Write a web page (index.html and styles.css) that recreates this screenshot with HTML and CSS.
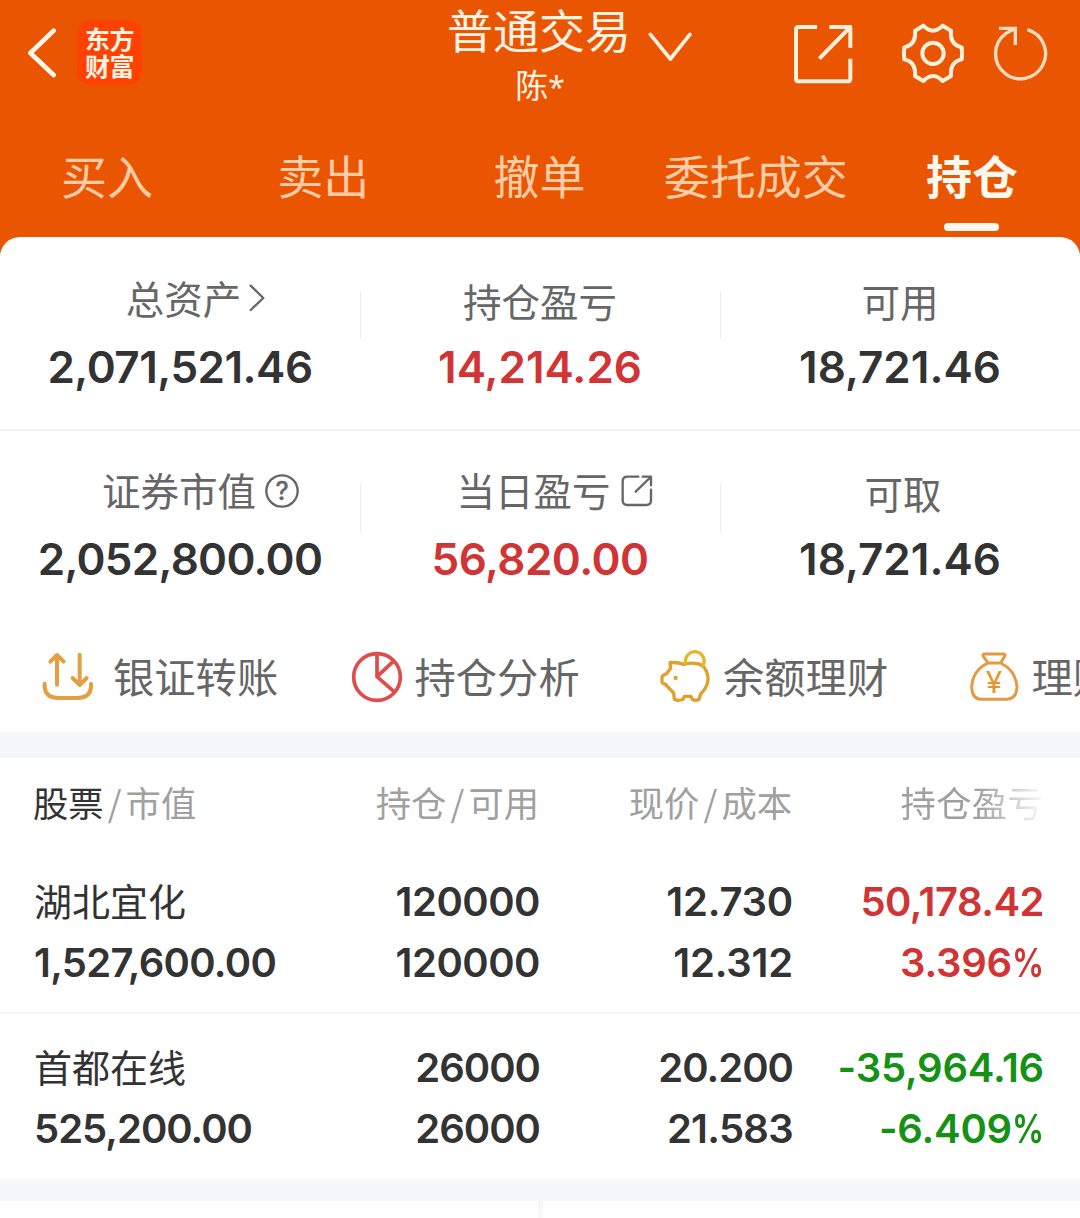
FILE: index.html
```html
<!DOCTYPE html>
<html lang="zh-CN">
<head>
<meta charset="utf-8">
<title>普通交易</title>
<link rel="stylesheet" href="styles.css">
</head>
<body>
<header class="header">
  <div class="topbar">
    <div class="top-left">
      <svg class="back" width="29" height="50" viewBox="86 85 87 150"><path d="M163 93 93 160 163 226"/></svg>
      <div class="logo"><span>东方</span><span>财富</span></div>
    </div>
    <div class="top-center">
      <div class="title"><span>普通交易</span>
        <svg width="44" height="30" viewBox="654 97 132 90"><path d="M661 104 721 178 780 104"/></svg>
      </div>
      <div class="account">陈<b>*</b></div>
    </div>
    <div class="top-right">
      <svg class="share" width="60" height="60" viewBox="219 73 180 180"><path d="M291 82H236Q228 82 228 90V237Q228 245 236 245H382Q391 245 391 237V177M328 82H391V144M389 84 298 177"/></svg>
      <svg class="gear" width="64" height="62" viewBox="543 65 192 186"><path d="M610 76Q639 106 668 76L693 91Q689 133 725 141Q728 159 725 177Q689 185 693 227L668 242Q639 212 610 242L585 227Q589 185 553 177Q550 159 553 141Q589 133 585 91Z"/><circle cx="639" cy="159" r="32"/></svg>
      <svg class="refresh" width="56" height="56" viewBox="815 75 168 168"><path d="M915 89A75 75 0 1 1 850 101L877 86M830 85H879V135"/></svg>
    </div>
  </div>
  <nav class="tabs">
    <span>买入</span><span>卖出</span><span>撤单</span><span>委托成交</span><span class="active">持仓</span>
  </nav>
</header>
<main>
  <section class="card">
    <div class="summary">
      <div class="cell">
        <div class="label shift-a"><span>总资产</span><svg width="16" height="28" viewBox="748 45 48 84"><path d="M753 50 791 87 753 123"/></svg></div>
        <div class="num snug">2,071,521.46</div>
      </div>
      <div class="cell">
        <div class="label low">持仓盈亏</div>
        <div class="num up">14,214.26</div>
      </div>
      <div class="cell">
        <div class="label low">可用</div>
        <div class="num">18,721.46</div>
      </div>
    </div>
    <div class="summary second">
      <div class="cell">
        <div class="label shift-b"><span>证券市值</span><svg width="34" height="34" viewBox="795 612 102 102"><circle cx="846" cy="663" r="47"/><text x="846" y="690" text-anchor="middle">?</text></svg></div>
        <div class="num tight">2,052,800.00</div>
      </div>
      <div class="cell">
        <div class="label shift-c"><span>当日盈亏</span><svg width="32" height="32" viewBox="783 616 96 96"><path d="M835 621H802Q788 621 788 635V692Q788 706 802 706H859Q873 706 873 692V660M848 621H873V647M872 622 827 666"/></svg></div>
        <div class="num up snug">56,820.00</div>
      </div>
      <div class="cell">
        <div class="label low shift-d">可取</div>
        <div class="num">18,721.46</div>
      </div>
    </div>
    <div class="quick">
      <div class="item">
        <svg class="transfer" width="54" height="54" viewBox="123 59 162 162"><path d="M134 160V170Q137 203 175 203H232Q270 203 273 170V160M171 163V75M151 94 171 74 191 94M239 73V162M218 143 239 164 260 143"/></svg>
        <span>银证转账</span>
      </div>
      <div class="item">
        <svg class="pie" width="54" height="54" viewBox="1049 59 162 162"><circle cx="1130" cy="140" r="70"/><path d="M1130 70V139L1178 94M1130 139 1181 184"/></svg>
        <span>持仓分析</span>
      </div>
      <div class="item">
        <svg class="pig" width="54" height="54" viewBox="54 59 162 162"><path d="M90 97Q113 95 132 102Q168 93 189 107Q206 127 204 150Q200 175 181 192L178 206Q167 213 157 207L153 198H133L129 207Q115 213 103 207L101 188 75 161Q65 160 66 152V140Q69 133 80 130L92 113Z"/><path class="coin" d="M137 98A28 28 0 1 1 188 107"/><circle class="eye" cx="107" cy="143" r="6.5"/></svg>
        <span>余额理财</span>
      </div>
      <div class="item">
        <svg class="bag" width="54" height="54" viewBox="979 59 162 162"><path d="M1032 71H1088Q1095 71 1092 78L1080 98H1042L1028 78Q1025 71 1032 71ZM1042 98Q995 120 993 172Q995 207 1022 207H1098Q1128 205 1129 170Q1125 120 1080 98"/><text x="1060" y="188" text-anchor="middle">¥</text></svg>
        <span>理财</span>
      </div>
    </div>
  </section>
  <section class="holdings">
    <div class="row head">
      <span class="first"><b>股票</b><i>/</i>市值</span>
      <span>持仓<i>/</i>可用</span>
      <span>现价<i>/</i>成本</span>
      <span class="fade">持仓盈亏</span>
    </div>
    <div class="row stock">
      <div class="first"><span class="name">湖北宜化</span><span class="tight">1,527,600.00</span></div>
      <div><span class="snug">120000</span><span class="snug">120000</span></div>
      <div><span class="loose">12.730</span><span class="loose">12.312</span></div>
      <div class="up"><span class="snug">50,178.42</span><span class="slim">3.396<i>%</i></span></div>
    </div>
    <div class="row stock last">
      <div class="first"><span class="name">首都在线</span><span class="tighter">525,200.00</span></div>
      <div><span class="tighter">26000</span><span class="tighter">26000</span></div>
      <div><span class="tighter">20.200</span><span class="tight">21.583</span></div>
      <div class="down"><span class="loose">-35,964.16</span><span class="slim">-6.409<i>%</i></span></div>
    </div>
  </section>
  <footer class="bottom"><div></div><div></div></footer>
</main>
</body>
</html>
```
FILE: styles.css
```css
* { box-sizing: border-box; }
body {
  margin: 0;
  width: 1080px;
  height: 1218px;
  overflow: hidden;
  background: #f6f7fa;
  color: #333;
  font-family: "Noto Sans CJK SC", sans-serif;
}
svg { display: block; flex: none; fill: none; stroke-linecap: round; stroke-linejoin: round; }
b, i { font-weight: inherit; font-style: normal; }

/* Header */
.header { height: 267px; background: #ea5502; color: #fff2e2; }
.topbar { display: grid; grid-template-columns: 447px 1fr 289px; height: 120px; }
.top-left { display: flex; align-items: flex-start; padding: 20px 0 0 28px; }
.back { margin-top: 8px; stroke: #fff6ea; stroke-width: 14; }
.logo {
  display: flex; flex-direction: column; align-items: center;
  width: 65px; height: 65px; margin-left: 20px; padding-top: 5px;
  border-radius: 14px; background: #ff4201;
  font-size: 25px; font-weight: 700; line-height: 27px; letter-spacing: -0.5px;
}
.title { display: flex; gap: 17px; font-size: 46px; line-height: 56px; }
.title svg { margin-top: 32px; stroke: #fff2e2; stroke-width: 11; }
.account { width: 186px; text-align: center; font-size: 33px; line-height: 40px; margin-top: 2px; }
.account b { font-family: "Noto Sans", sans-serif; font-size: 30px; line-height: 1; }
.top-right { display: flex; align-items: flex-start; }
.top-right svg { stroke: #fff0dc; }
.share { margin: 24px 0 0 2px; stroke-width: 12; stroke-linecap: butt; }
.gear { margin: 22px 0 0 48px; stroke-width: 12; }
.refresh { margin: 25px 0 0 29px; stroke-width: 10; opacity: .88; stroke-linecap: butt; stroke-linejoin: miter; overflow: visible; }
.tabs { display: grid; grid-template-columns: repeat(5, 1fr); margin-left: -1px; }
.tabs span {
  display: flex; flex-direction: column; align-items: center;
  height: 111px; padding-top: 24px;
  color: #ffcca6; font-size: 46px; line-height: 60px; white-space: nowrap;
}
.tabs .active { color: #fff8ee; font-weight: 700; }
.tabs .active::after {
  content: ""; width: 55px; height: 9px; margin-top: 19px;
  border-radius: 5px; background: #fff8ee;
}

/* Account summary */
.card {
  height: 495px; margin-top: -30px; overflow: hidden;
  border-radius: 20px 20px 0 0; background: #fff;
}
.summary { display: grid; grid-template-columns: repeat(3, 360px); height: 194px; border-bottom: 2px solid #f4f4f4; }
.second { height: 192px; border-bottom: 0; }
.cell { padding-top: 40px; background: linear-gradient(#ededed, #ededed) left 54px / 1px 48px no-repeat; }
.cell:first-child { background: none; }
.second .cell { padding-top: 38px; background-position: left 53px; }
.label {
  display: flex; align-items: center; justify-content: center;
  height: 40px; color: #666; font-size: 38.5px; line-height: 38px;
}
.label svg { stroke: #666; stroke-width: 7; }
.label svg text { fill: #666; stroke: #666; stroke-width: 1; font: 500 75px Inter, sans-serif; }
.low { position: relative; top: 3px; }
.shift-a { padding-left: 31px; gap: 8px; }
.shift-a svg { margin-top: 2px; }
.shift-b { padding-left: 41px; gap: 9px; }
.shift-c { padding-left: 29px; gap: 10px; }
.shift-b svg, .shift-c svg { margin-top: 4px; }
.shift-d { padding-left: 6px; }
.num {
  margin-top: 26px; text-align: center;
  font: 600 44px/48px Inter, sans-serif;
}
.up { color: #d03434; }
.down { color: #159215; }
.loose { letter-spacing: -0.2px; }
.slim { letter-spacing: -0.2px; }
.snug { letter-spacing: -0.5px; }
.tight { letter-spacing: -0.72px; }
.tighter { letter-spacing: -1px; }

/* Shortcuts */
.quick { display: flex; height: 109px; padding-left: 41px; }
.item { display: flex; flex: none; width: 308.5px; padding-top: 27px; }
.item span { margin-left: 11px; color: #666; font-size: 41.3px; line-height: 50px; white-space: nowrap; }
.item:first-child span { margin-left: 18px; }
.transfer { stroke: #e2a040; stroke-width: 12; }
.pie { stroke: #e04c4c; stroke-width: 11; }
.pig { stroke: #e0a02c; stroke-width: 10; }
.coin { stroke: #e6b62e; }
.eye { fill: #e0a02c; stroke: none; }
.bag { stroke: #e59a42; stroke-width: 9; }
.bag text { fill: #e8952c; stroke: none; font: 400 90px Inter, sans-serif; }

/* Holdings */
.holdings { margin-top: 26px; background: #fff; }
.row { display: grid; grid-template-columns: 334px 205px 253px 251px; padding-right: 37px; text-align: right; }
.first { padding-left: 34px; text-align: left; }
.head { height: 90px; padding-top: 22px; color: #a0a0a0; font-size: 35.3px; line-height: 43px; }
.head b { color: #333; }
.head i { display: inline-block; width: 22px; text-align: center; }
.head .first { padding-left: 33px; }
.fade { letter-spacing: 0.3px; -webkit-mask: linear-gradient(90deg, #000 74%, transparent 102%); mask: linear-gradient(90deg, #000 74%, transparent 102%); }
.stock { height: 166px; padding-top: 23px; border-bottom: 2px solid #f4f4f4; font: 600 40px/61px Inter, sans-serif; }
.stock span { display: block; height: 61px; position: relative; left: 1px; }
.stock .first span { left: 0; }
.stock i { display: inline-block; margin-left: -8px; transform: scaleX(.8); transform-origin: right; }
.stock .name { font-family: "Noto Sans CJK SC", sans-serif; font-weight: 400; font-size: 38px; line-height: 58px; }
.last { height: 165px; border-bottom: 0; }
.bottom { display: grid; grid-template-columns: 538px 1fr; gap: 5px; height: 18px; margin-top: 22px; }
.bottom div { background: #fff; }
```
